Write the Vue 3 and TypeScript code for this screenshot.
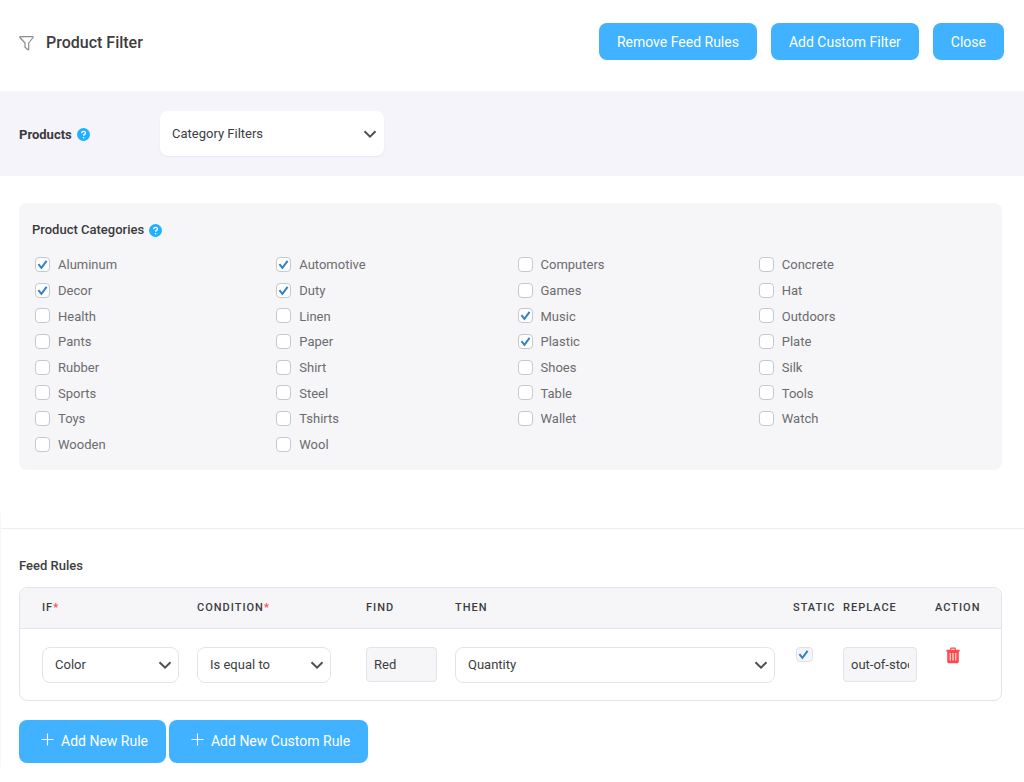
<script setup lang="ts">
import { reactive, ref } from 'vue'

interface Category {
  name: string
  checked: boolean
}

const selected = ['Aluminum', 'Automotive', 'Decor', 'Duty', 'Music', 'Plastic']
const names = [
  'Aluminum', 'Automotive', 'Computers', 'Concrete',
  'Decor', 'Duty', 'Games', 'Hat',
  'Health', 'Linen', 'Music', 'Outdoors',
  'Pants', 'Paper', 'Plastic', 'Plate',
  'Rubber', 'Shirt', 'Shoes', 'Silk',
  'Sports', 'Steel', 'Table', 'Tools',
  'Toys', 'Tshirts', 'Wallet', 'Watch',
  'Wooden', 'Wool',
]
const categories = reactive<Category[]>(
  names.map((name) => ({ name, checked: selected.includes(name) })),
)

const filterType = ref('Category Filters')
const rule = reactive({
  field: 'Color',
  condition: 'Is equal to',
  find: 'Red',
  then: 'Quantity',
  isStatic: true,
  replace: 'out-of-stock',
})
</script>

<template>
  <main class="page">
    <header class="top">
      <svg class="funnel" viewBox="0 0 15 16" aria-hidden="true">
        <path d="M1.300 1.700h12.400c.5 0 .6.4.4.8L9.700 8v6.300c0 .5-.4.7-.8.5L6 12.300V8L.900 2.500c-.3-.4-.1-.8.4-.8z" />
      </svg>
      <h1>Product Filter</h1>
      <div class="actions">
        <button type="button" class="btn">Remove Feed Rules</button>
        <button type="button" class="btn">Add Custom Filter</button>
        <button type="button" class="btn">Close</button>
      </div>
    </header>

    <section class="products">
      <div class="products-label">
        <label class="title" for="products">Products</label>
        <svg class="help" viewBox="0 0 14 14" aria-hidden="true">
          <circle cx="7" cy="7" r="7" />
          <path d="M5 5.600c0-2.600 4.100-2.600 4.100-.2 0 1.500-2 1.500-2 2.900" />
          <path d="M7.100 9.700v1.400" />
        </svg>
      </div>
      <div class="select main-select">
        <select id="products" v-model="filterType">
          <option>Category Filters</option>
        </select>
        <svg viewBox="0 0 14 10" aria-hidden="true"><path d="M1.500 2.300L7 7.700l5.500-5.400" /></svg>
      </div>
    </section>

    <section class="panel" aria-labelledby="cat-title">
      <div class="panel-head">
        <h2 id="cat-title" class="title">Product Categories</h2>
        <svg class="help" viewBox="0 0 14 14" aria-hidden="true">
          <circle cx="7" cy="7" r="7" />
          <path d="M5 5.600c0-2.600 4.100-2.600 4.100-.2 0 1.500-2 1.500-2 2.900" />
          <path d="M7.100 9.700v1.400" />
        </svg>
      </div>
      <div class="grid">
        <label v-for="c in categories" :key="c.name" class="category">
          <span class="check">
            <input v-model="c.checked" type="checkbox" />
            <svg v-if="c.checked" viewBox="0 0 15 15" aria-hidden="true"><path d="M3.400 7.200l3 3.600 5.200-6.900" /></svg>
          </span>
          <span class="name">{{ c.name }}</span>
        </label>
      </div>
    </section>

    <section class="rules">
      <div class="rules-body">
        <h2>Feed Rules</h2>
        <div class="table-box">
          <table>
            <colgroup>
              <col class="c-if" />
              <col class="c-condition" />
              <col class="c-find" />
              <col />
              <col class="c-static" />
              <col class="c-replace" />
              <col class="c-action" />
            </colgroup>
            <thead>
              <tr>
                <th scope="col">If<span class="req">*</span></th>
                <th scope="col">Condition<span class="req">*</span></th>
                <th scope="col">Find</th>
                <th scope="col">Then</th>
                <th scope="col">Static</th>
                <th scope="col">Replace</th>
                <th scope="col">Action</th>
              </tr>
            </thead>
            <tbody>
              <tr>
                <td>
                  <div class="select">
                    <select v-model="rule.field" aria-label="If"><option>Color</option></select>
                    <svg viewBox="0 0 14 10" aria-hidden="true"><path d="M1.500 2.300L7 7.700l5.500-5.400" /></svg>
                  </div>
                </td>
                <td class="wide-gap">
                  <div class="select">
                    <select v-model="rule.condition" aria-label="Condition"><option>Is equal to</option></select>
                    <svg viewBox="0 0 14 10" aria-hidden="true"><path d="M1.500 2.300L7 7.700l5.500-5.400" /></svg>
                  </div>
                </td>
                <td><input v-model="rule.find" class="text" type="text" aria-label="Find" /></td>
                <td>
                  <div class="select">
                    <select v-model="rule.then" aria-label="Then"><option>Quantity</option></select>
                    <svg viewBox="0 0 14 10" aria-hidden="true"><path d="M1.500 2.300L7 7.700l5.500-5.400" /></svg>
                  </div>
                </td>
                <td class="static">
                  <span class="check check-wide">
                    <input v-model="rule.isStatic" type="checkbox" aria-label="Static" />
                    <svg v-if="rule.isStatic" viewBox="0 0 15 15" aria-hidden="true"><path d="M3.400 7.200l3 3.600 5.200-6.900" /></svg>
                  </span>
                </td>
                <td><input v-model="rule.replace" class="text" type="text" aria-label="Replace" /></td>
                <td class="action">
                  <button type="button" class="trash" aria-label="Delete rule">
                    <svg viewBox="0 0 14 16" aria-hidden="true">
                      <path class="lid" d="M4.700 2.500V1.200c0-.3.200-.5.500-.5h3.600c.3 0 .5.2.5.500v1.300" />
                      <path class="can" d="M.3 2.300h13.400v1.700h-.9v10.300c0 .9-.6 1.500-1.500 1.500H2.700c-.9 0-1.500-.6-1.500-1.500V4H.3z" />
                      <path class="ribs" d="M4.200 5.500v7.500M7 5.500v7.500M9.800 5.500v7.500" />
                    </svg>
                  </button>
                </td>
              </tr>
            </tbody>
          </table>
        </div>
        <div class="add-row">
          <button type="button" class="btn add">
            <svg viewBox="0 0 14 14" aria-hidden="true"><path d="M7 .5v13M.5 7h13" /></svg>
            Add New Rule
          </button>
          <button type="button" class="btn add">
            <svg viewBox="0 0 14 14" aria-hidden="true"><path d="M7 .5v13M.5 7h13" /></svg>
            Add New Custom Rule
          </button>
        </div>
      </div>
    </section>
  </main>
</template>

<style>
body {
  background: #fff;
}
</style>

<style scoped>
* {
  box-sizing: border-box;
}

.page,
.page button,
.page input,
.page select {
  font-family: Roboto, "Liberation Sans", sans-serif;
}

.page {
  color: #3d3d3f;
  font-size: 13px;
  line-height: 20px;
}

h1,
h2 {
  margin: 0;
}

.top {
  display: flex;
  align-items: center;
  padding: 23px 20px 31px 19px;
}

.funnel {
  width: 15px;
  height: 16px;
  margin-top: 2px;
  margin-right: 12px;
  fill: none;
  stroke: #8c8c8e;
  stroke-width: 1.2;
  stroke-linejoin: round;
}

h1 {
  padding-top: 2px;
  font-size: 16px;
  font-weight: 500;
}

.actions {
  display: flex;
  gap: 14px;
  margin-left: auto;
}

.btn {
  height: 37px;
  padding: 0 18px;
  border: 0;
  border-radius: 8px;
  background: #40b2ff;
  color: #fff;
  font-size: 14px;
  cursor: pointer;
}

.products {
  display: flex;
  align-items: center;
  padding: 20px 19px;
  background: #f4f4fa;
}

.products-label {
  display: flex;
  align-items: center;
  width: 141px;
  padding-top: 2px;
}

.title {
  color: #3a3a3c;
  font-size: 13px;
  font-weight: 500;
}

.products .title {
  font-weight: 700;
}

.help {
  width: 13px;
  height: 13px;
  margin-left: 5px;
  fill: none;
  stroke: #fff;
  stroke-width: 1.5;
}

.help circle {
  fill: #1fb0ff;
  stroke: none;
}

.select {
  display: grid;
  align-items: center;
}

.select select,
.select svg {
  grid-area: 1 / 1;
}

.select select {
  width: 100%;
  height: 36px;
  padding: 0 30px 0 12px;
  border: 1px solid #e3e3ee;
  border-radius: 8px;
  appearance: none;
  background: #fff;
  color: #3d3d3f;
  font-size: 13px;
}

.select svg {
  justify-self: end;
  width: 14px;
  height: 10px;
  margin-top: 1px;
  margin-right: 7px;
  fill: none;
  stroke: #505053;
  stroke-width: 2;
  pointer-events: none;
}

.main-select {
  width: 224px;
}

.main-select select {
  height: 45px;
  border: 0;
  box-shadow: 0 1px 2px rgba(40, 40, 90, 0.06);
}

.panel {
  margin: 27px 22px 0 19px;
  padding: 17px 2px 13px 13px;
  border-radius: 8px;
  background: #f6f6f9;
}

.panel-head {
  display: flex;
  align-items: center;
}

.grid {
  display: grid;
  grid-template-columns: repeat(4, 1fr);
  grid-auto-rows: 26px 26px 25px;
  margin-top: 11px;
  padding-left: 3px;
}

.category {
  display: flex;
  align-items: center;
  gap: 8px;
  color: #6c6c6e;
}

.name {
  padding-top: 2px;
}

.check {
  display: inline-grid;
  width: 15px;
  height: 15px;
}

.check input,
.check svg {
  grid-area: 1 / 1;
}

.check input {
  width: 100%;
  height: 100%;
  margin: 0;
  border: 1px solid #c5c8ce;
  border-radius: 4px;
  appearance: none;
  background: #fff;
}

.check svg {
  width: 15px;
  height: 15px;
  fill: none;
  stroke: #3582c4;
  stroke-width: 2;
  pointer-events: none;
}

.rules {
  margin-top: 43px;
  padding-top: 15px;
  border-left: 1px solid #f7f7f7;
}

.rules-body {
  padding: 27px 22px 4px 18px;
  border-top: 1px solid #ededf0;
}

.rules h2 {
  font-size: 13px;
  font-weight: 500;
}

.table-box {
  margin-top: 11px;
  overflow: hidden;
  border: 1px solid #e3e3ee;
  border-radius: 8px;
}

table {
  width: 100%;
  border-collapse: collapse;
  table-layout: fixed;
}

.c-if {
  width: 177px;
}

.c-condition {
  width: 169px;
}

.c-find {
  width: 89px;
}

.c-static {
  width: 50px;
}

.c-replace {
  width: 92px;
}

.c-action {
  width: 66px;
}

th {
  height: 40px;
  padding: 1px 0 0;
  border-bottom: 1px solid #e3e3ee;
  background: #f6f6f9;
  font-size: 11px;
  font-weight: 500;
  letter-spacing: 1px;
  text-align: left;
  text-transform: uppercase;
  white-space: nowrap;
}

td {
  padding: 18px 18px 17px 0;
  vertical-align: top;
}

th:first-child,
td:first-child {
  padding-left: 22px;
}

td.wide-gap {
  padding-right: 35px;
}

td.static,
td.action {
  padding-right: 0;
}

.req {
  color: #ff4b4b;
  font-weight: 700;
}

.text {
  display: block;
  width: 100%;
  height: 35px;
  padding: 0 7px;
  border: 1px solid #e3e3ee;
  border-radius: 4px;
  background: #f6f6f9;
  color: #3d3d3f;
  font-size: 13px;
}

.check-wide {
  width: 17px;
  margin-left: 3px;
}

.check-wide input {
  border-color: #e0e0ea;
  background: #f4f4f9;
}

.trash {
  display: block;
  margin-left: 11px;
  padding: 0;
  border: 0;
  background: none;
  cursor: pointer;
}

.trash svg {
  display: block;
  width: 14px;
  height: 17px;
}

.lid {
  fill: none;
  stroke: #ff4b4b;
  stroke-width: 1.2;
}

.can {
  fill: #ff4b4b;
}

.ribs {
  fill: none;
  stroke: #fff;
  stroke-width: 1;
}

.add-row {
  display: flex;
  gap: 3px;
  margin-top: 19px;
}

.add {
  display: flex;
  align-items: center;
  gap: 7px;
  height: 43px;
  padding: 0 18px 0 22px;
}

.add svg {
  width: 13px;
  height: 13px;
  margin-bottom: 3px;
  fill: none;
  stroke: #fff;
  stroke-width: 1.2;
}
</style>
